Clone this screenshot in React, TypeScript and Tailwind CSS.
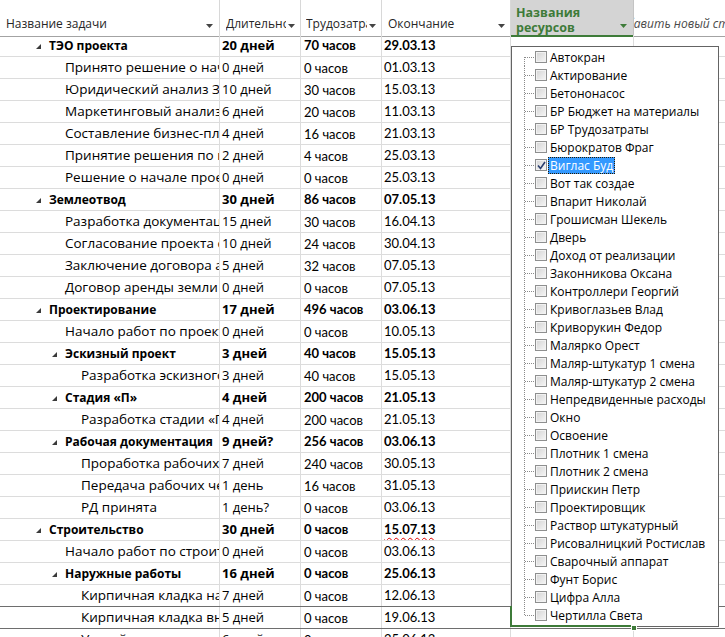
type Row = {
  lvl: 1 | 2 | 3;
  sum?: boolean;
  name: string;
  dur: string;
  work: string;
  fin: string;
  wavy?: boolean;
};

const rows: Row[] = [
  { lvl: 1, sum: true, name: "ТЭО проекта", dur: "20 дней", work: "70 часов", fin: "29.03.13" },
  { lvl: 2, name: "Принято решение о начале проекта", dur: "0 дней", work: "0 часов", fin: "01.03.13" },
  { lvl: 2, name: "Юридический анализ ЗУ", dur: "10 дней", work: "30 часов", fin: "15.03.13" },
  { lvl: 2, name: "Маркетинговый анализ рынка", dur: "6 дней", work: "20 часов", fin: "11.03.13" },
  { lvl: 2, name: "Составление бизнес-плана", dur: "4 дней", work: "16 часов", fin: "21.03.13" },
  { lvl: 2, name: "Принятие решения по проекту", dur: "2 дней", work: "4 часов", fin: "25.03.13" },
  { lvl: 2, name: "Решение о начале проекта", dur: "0 дней", work: "0 часов", fin: "25.03.13" },
  { lvl: 1, sum: true, name: "Землеотвод", dur: "30 дней", work: "86 часов", fin: "07.05.13" },
  { lvl: 2, name: "Разработка документации", dur: "15 дней", work: "30 часов", fin: "16.04.13" },
  { lvl: 2, name: "Согласование проекта с администрацией", dur: "10 дней", work: "24 часов", fin: "30.04.13" },
  { lvl: 2, name: "Заключение договора аренды", dur: "5 дней", work: "32 часов", fin: "07.05.13" },
  { lvl: 2, name: "Договор аренды земли подписан", dur: "0 дней", work: "0 часов", fin: "07.05.13" },
  { lvl: 1, sum: true, name: "Проектирование", dur: "17 дней", work: "496 часов", fin: "03.06.13" },
  { lvl: 2, name: "Начало работ по проектированию", dur: "0 дней", work: "0 часов", fin: "10.05.13" },
  { lvl: 2, sum: true, name: "Эскизный проект", dur: "3 дней", work: "40 часов", fin: "15.05.13" },
  { lvl: 3, name: "Разработка эскизного проекта", dur: "3 дней", work: "40 часов", fin: "15.05.13" },
  { lvl: 2, sum: true, name: "Стадия «П»", dur: "4 дней", work: "200 часов", fin: "21.05.13" },
  { lvl: 3, name: "Разработка стадии «П»", dur: "4 дней", work: "200 часов", fin: "21.05.13" },
  { lvl: 2, sum: true, name: "Рабочая документация", dur: "9 дней?", work: "256 часов", fin: "03.06.13" },
  { lvl: 3, name: "Проработка рабочих чертежей", dur: "7 дней", work: "240 часов", fin: "30.05.13" },
  { lvl: 3, name: "Передача рабочих чертежей", dur: "1 день", work: "16 часов", fin: "31.05.13" },
  { lvl: 3, name: "РД принята", dur: "1 день?", work: "0 часов", fin: "03.06.13" },
  { lvl: 1, sum: true, name: "Строительство", dur: "30 дней", work: "0 часов", fin: "15.07.13", wavy: true },
  { lvl: 2, name: "Начало работ по строительству", dur: "0 дней", work: "0 часов", fin: "03.06.13" },
  { lvl: 2, sum: true, name: "Наружные работы", dur: "16 дней", work: "0 часов", fin: "25.06.13" },
  { lvl: 3, name: "Кирпичная кладка наружных стен", dur: "7 дней", work: "0 часов", fin: "12.06.13" },
  { lvl: 3, name: "Кирпичная кладка внутренних стен", dur: "5 дней", work: "0 часов", fin: "19.06.13" },
  { lvl: 3, name: "Устройство кровли", dur: "6 дней", work: "0 часов", fin: "25.06.13" },
];

const resources = [
  "Автокран",
  "Актирование",
  "Бетононасос",
  "БР Бюджет на материалы",
  "БР Трудозатраты",
  "Бюрократов Фраг",
  "Виглас Буд",
  "Вот так создае",
  "Впарит Николай",
  "Грошисман Шекель",
  "Дверь",
  "Доход от реализации",
  "Законникова Оксана",
  "Контроллери Георгий",
  "Кривоглазьев Влад",
  "Криворукин Федор",
  "Малярко Орест",
  "Маляр-штукатур 1 смена",
  "Маляр-штукатур 2 смена",
  "Непредвиденные расходы",
  "Окно",
  "Освоение",
  "Плотник 1 смена",
  "Плотник 2 смена",
  "Приискин Петр",
  "Проектировщик",
  "Раствор штукатурный",
  "Рисовалницкий Ростислав",
  "Сварочный аппарат",
  "Фунт Борис",
  "Цифра Алла",
  "Чертилла Света",
];

const SEL_ROW = 26;
const SEL_RES = 6;

const font = "font-['Open_Sans','Noto_Sans',sans-serif]";
const numFont = "font-['Lato','Open_Sans',sans-serif]";

const Arrow = ({ green }: { green?: boolean }) => (
  <svg width="7" height="4" viewBox="0 0 7 4" className="shrink-0">
    <polygon points="0,0 7,0 3.5,4" fill={green ? "#3e7b39" : "#444"} />
  </svg>
);

const Toggle = () => (
  <svg width="5" height="5" viewBox="0 0 5 5" className="shrink-0">
    <polygon points="5,0 5,5 0,5" fill="#3a3a3a" />
  </svg>
);

const padFor = (r: Row) => {
  if (r.sum) return r.lvl === 1 ? "pl-[36px]" : "pl-[52px]";
  return r.lvl === 2 ? "pl-[65px]" : "pl-[81px]";
};

const Header = () => (
  <div className={`grid grid-cols-[220px_81px_81px_129px_123px_1fr] h-[35px] text-[12px] text-[#262626] ${font}`}>
    <div className="flex items-end pb-[3px] pl-[6px] pr-[6px] border-r border-b border-r-[#d8d8d8] border-b-[#a3a3a3]">
      <span className="flex-1 overflow-hidden whitespace-nowrap">Название задачи</span>
      <div className="pb-[5px]"><Arrow /></div>
    </div>
    <div className="flex items-end pb-[3px] pl-[6px] pr-[5px] border-r border-b border-r-[#d8d8d8] border-b-[#a3a3a3]">
      <span className="flex-1 overflow-hidden whitespace-nowrap">Длительность</span>
      <div className="pb-[5px] ml-[2px]"><Arrow /></div>
    </div>
    <div className="flex items-end pb-[3px] pl-[5px] pr-[5px] border-r border-b border-r-[#d8d8d8] border-b-[#a3a3a3]">
      <span className="flex-1 overflow-hidden whitespace-nowrap">Трудозатраты</span>
      <div className="pb-[5px] ml-[2px]"><Arrow /></div>
    </div>
    <div className="flex items-end pb-[3px] pl-[6px] pr-[5px] border-r border-b border-r-[#d8d8d8] border-b-[#a3a3a3]">
      <span className="flex-1 overflow-hidden whitespace-nowrap">Окончание</span>
      <div className="pb-[5px]"><Arrow /></div>
    </div>
    <div className="flex items-end pl-[5px] pr-[6px] bg-[#d4d4d4] border-b-2 border-[#3e7b39] border-r border-r-[#c4c4c4] text-[#3e7b39] font-bold leading-[15px] text-[12.5px]">
      <span className="flex-1 self-start pt-[5px]">Названия<br />ресурсов</span>
      <div className="pb-[7px]"><Arrow green /></div>
    </div>
    <div className="flex items-end pb-[3px] overflow-hidden border-b border-[#a3a3a3] italic text-[#4a4a4a]">
      <span className="whitespace-nowrap -ml-[21px]">Добавить новый столбец</span>
    </div>
  </div>
);

const TaskRow = ({ r, i }: { r: Row; i: number }) => {
  const dark = i === SEL_ROW || i === SEL_ROW - 1;
  const bottom = dark ? "border-b-[#6e6e6e]" : "border-b-[#dcdcdc]";
  const weight = r.sum ? "font-bold" : "";
  return (
    <div className={`grid grid-cols-[220px_81px_81px_129px_123px_1fr] h-[22px] border-b ${bottom} text-[13px] text-black`}>
      <div className={`flex items-center gap-[8px] overflow-hidden whitespace-nowrap border-r border-[#dcdcdc] ${padFor(r)} ${font} ${r.sum ? "font-bold text-[12px] pt-[1px]" : "text-[13.5px]"}`}>
        {r.sum && <Toggle />}
        <span>{r.name}</span>
      </div>
      <div className={`flex items-center pl-[2px] overflow-hidden whitespace-nowrap border-r border-[#dcdcdc] ${font} ${weight}`}>
        {r.dur}
      </div>
      <div className={`flex items-center pl-[3px] overflow-hidden whitespace-nowrap border-r border-[#dcdcdc] ${numFont} ${r.sum ? "font-bold" : "pt-[3px]"}`}>
        {r.work}
      </div>
      <div className={`flex items-center pl-[2px] overflow-hidden whitespace-nowrap border-r border-[#dcdcdc] ${numFont} ${weight}`}>
        <span className={r.wavy ? "underline decoration-wavy decoration-[#e00000] decoration-1 underline-offset-[3px]" : ""}>
          {r.fin}
        </span>
      </div>
      <div className="border-r border-[#dcdcdc]" />
      <div />
    </div>
  );
};

const TreeLines = ({ first, last }: { first: boolean; last: boolean }) => (
  <svg width="23" height="18" viewBox="0 0 23 18" className="shrink-0">
    <line
      x1="12.5"
      y1={first ? 9 : 0}
      x2="12.5"
      y2={last ? 9 : 18}
      stroke="#8a8a8a"
      strokeWidth="1"
      strokeDasharray="1 1"
    />
    <line x1="13" y1="9.5" x2="23" y2="9.5" stroke="#8a8a8a" strokeWidth="1" strokeDasharray="1 1" />
  </svg>
);

const Check = ({ on }: { on: boolean }) => (
  <div className="w-[12px] h-[12px] shrink-0 border border-[#8e8f8f] bg-linear-to-br from-[#d4d4d4] to-[#f6f6f6] shadow-[inset_0_0_0_1px_#f2f2f2] flex items-center justify-center">
    {on && (
      <svg width="9" height="9" viewBox="0 0 9 9">
        <path d="M1 4.5 L3.5 7.5 L8 1" fill="none" stroke="#2b3e6e" strokeWidth="1.6" />
      </svg>
    )}
  </div>
);

const ResourceFilter = () => (
  <div className={`absolute left-[511px] top-[46px] w-[208px] h-[581px] border border-[#646464] bg-white pt-[1px] z-10 ${font}`}>
    {resources.map((name, i) => (
      <div key={name} className="flex items-center h-[18px]">
        <TreeLines first={i === 0} last={i === resources.length - 1} />
        <Check on={i === SEL_RES} />
        <span
          className={`ml-[1px] px-[1px] h-[17px] leading-[15px] text-[12px] whitespace-nowrap border ${
            i === SEL_RES
              ? "bg-[#3399ff] text-white border-dotted border-[#2a1a00]"
              : "text-black border-transparent"
          }`}
        >
          {name}
        </span>
      </div>
    ))}
  </div>
);

export default function App() {
  return (
    <div className="relative w-[725px] h-[637px] overflow-hidden bg-white">
      <Header />
      {rows.map((r, i) => (
        <TaskRow key={i} r={r} i={i} />
      ))}
      <ResourceFilter />
      <div className="absolute left-[510px] top-[606px] w-[2px] h-[21px] bg-[#3e7b39] z-20" />
      <div className="absolute left-[510px] top-[625px] w-[125px] h-[2px] bg-[#3e7b39] z-20" />
      <div className="absolute left-[631px] top-[625px] w-[6px] h-[6px] bg-[#3e7b39] border border-white z-20" />
    </div>
  );
}
